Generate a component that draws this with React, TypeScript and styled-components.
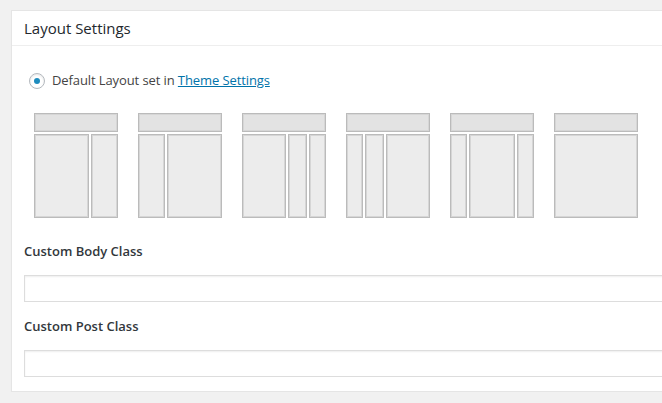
import React from "react";
import styled, { createGlobalStyle } from "styled-components";

const GlobalStyle = createGlobalStyle`
  html, body {
    margin: 0;
    padding: 0;
    background: #f1f1f1;
    overflow: hidden;
  }
  body {
    font-family: "Open Sans", "Liberation Sans", sans-serif;
    color: #444;
  }
`;

const Page = styled.div`
  padding: 10px 0 0 11px;
  width: 800px;
`;

const Panel = styled.div`
  width: 720px;
  background: #fff;
  border: 1px solid #e5e5e5;
  box-shadow: 0 1px 1px rgba(0, 0, 0, 0.04);
`;

const Header = styled.h2`
  margin: 0;
  padding: 8px 12px;
  font-size: 15px;
  line-height: 18px;
  font-weight: 400;
  color: #23282d;
  border-bottom: 1px solid #eee;
`;

const Body = styled.div`
  padding: 24px 12px 14px;
`;

const RadioRow = styled.label`
  display: flex;
  align-items: center;
  gap: 7px;
  padding-left: 5px;
  font-size: 13px;
  line-height: 20px;
  letter-spacing: -0.1px;
  color: #444;
`;

const Radio = styled.span`
  box-sizing: border-box;
  width: 16px;
  height: 16px;
  margin-top: 2px;
  border-radius: 50%;
  border: 1px solid #b4b9be;
  background: #fff;
  box-shadow: inset 0 1px 2px rgba(0, 0, 0, 0.1);
  display: flex;
  align-items: center;
  justify-content: center;
  &::after {
    content: "";
    width: 6px;
    height: 6px;
    border-radius: 50%;
    background: #1e8cbe;
  }
`;

const Link = styled.a`
  color: #0073aa;
  text-decoration: underline;
`;

const Layouts = styled.div`
  display: flex;
  gap: 20px;
  margin: 23px 0 0 10px;
`;

const LayoutThumb = styled.div`
  width: 84px;
  display: flex;
  flex-direction: column;
  gap: 2px;
`;

const Block = styled.div<{ $fill: string }>`
  box-sizing: border-box;
  background: ${(p) => p.$fill};
  border: 1px solid #bbb;
  box-shadow: inset 0 0 0 1px #d6d6d6;
`;

const TopBar = styled(Block)`
  height: 19px;
`;

const Columns = styled.div<{ $cols: string }>`
  display: grid;
  grid-template-columns: ${(p) => p.$cols};
  gap: 2px;
  height: 84px;
`;

const FieldLabel = styled.div`
  margin-top: 23px;
  font-size: 13px;
  line-height: 20px;
  font-weight: 600;
  color: #32373c;
`;

const TextInput = styled.input`
  display: block;
  box-sizing: border-box;
  width: 700px;
  height: 27px;
  margin-top: 14px;
  border: 1px solid #ddd;
  background: #fff;
  box-shadow: inset 0 1px 2px rgba(0, 0, 0, 0.07);
  outline: none;
  & + ${FieldLabel} {
    margin-top: 14px;
  }
`;

const layouts = [
  "55px 27px",
  "27px 55px",
  "44px 19px 17px",
  "17px 19px 44px",
  "17px 46px 17px",
  "1fr",
];

export default function App() {
  return (
    <>
      <GlobalStyle />
      <Page>
        <Panel>
          <Header>Layout Settings</Header>
          <Body>
            <RadioRow>
              <Radio />
              <span>
                Default Layout set in <Link href="#">Theme Settings</Link>
              </span>
            </RadioRow>
            <Layouts>
              {layouts.map((cols, i) => (
                <LayoutThumb key={i}>
                  <TopBar $fill="#e3e3e3" />
                  <Columns $cols={cols}>
                    {cols.split(" ").map((_, j) => (
                      <Block key={j} $fill="#ececec" />
                    ))}
                  </Columns>
                </LayoutThumb>
              ))}
            </Layouts>
            <FieldLabel>Custom Body Class</FieldLabel>
            <TextInput type="text" />
            <FieldLabel>Custom Post Class</FieldLabel>
            <TextInput type="text" />
          </Body>
        </Panel>
      </Page>
    </>
  );
}
